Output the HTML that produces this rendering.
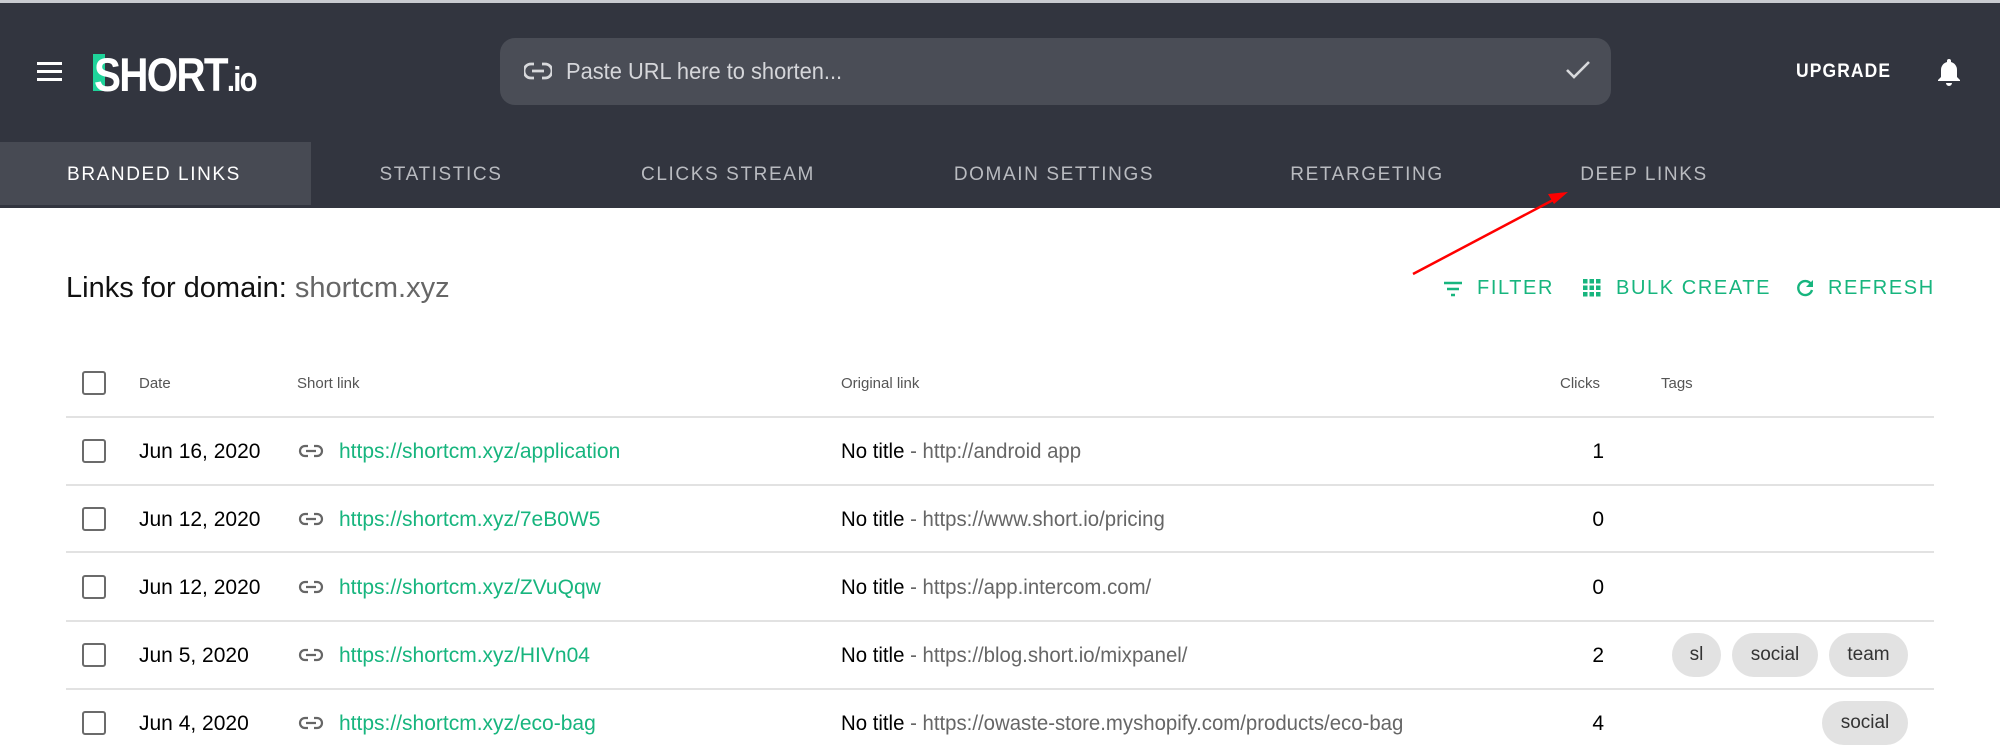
<!DOCTYPE html>
<html><head><meta charset="utf-8"><style>
*{margin:0;padding:0;box-sizing:border-box}
body{width:2000px;height:746px;overflow:hidden;background:#fff;font-family:"Liberation Sans",sans-serif;position:relative}
.a{position:absolute;white-space:nowrap}
.hdr{position:absolute;left:0;top:0;width:2000px;height:208px;background:#32353f;border-top:3px solid #c9cbd0}
.tab{position:absolute;top:164px;font-size:19px;letter-spacing:1.6px;color:#b9bbc0;transform:translateX(-50%)}
.th{font-size:15px;color:#555;top:375px}
.line{position:absolute;left:66px;width:1868px;height:2px;background:#e2e2e2}
.cb{position:absolute;left:82px;width:24px;height:24px;border:2.5px solid #6b6b6b;border-radius:3px}
.row{font-size:21px}
.nx{display:inline-block;transform:scaleX(0.97);transform-origin:left}
.chip{position:absolute;height:44px;border-radius:22px;background:#e2e2e2;font-size:19px;color:#333;text-align:center;line-height:44px}
.g{color:#17b57e}
.btn{font-size:20px;letter-spacing:1.6px;color:#17b57e;top:277px}
</style></head><body>
<div class="hdr"></div>
<div class="a" style="left:0;top:142px;width:311px;height:63px;background:#474a53"></div>
<div class="a" style="left:37px;top:62px;width:25px;height:3px;background:#fff"></div>
<div class="a" style="left:37px;top:70px;width:25px;height:3px;background:#fff"></div>
<div class="a" style="left:37px;top:78px;width:25px;height:3px;background:#fff"></div>
<div class="a" style="left:93px;top:54px;width:12px;height:37px;background:#1fd39a"></div>
<div class="a" style="left:94px;top:47px;font-size:47px;font-weight:bold;color:#fff;letter-spacing:-2px;transform:scaleX(0.86);transform-origin:left">SHORT<span style="font-size:34px">.io</span></div>
<div class="a" style="left:500px;top:38px;width:1111px;height:67px;background:#4a4d56;border-radius:15px"></div>
<svg class="a" style="left:524px;top:60px" width="28" height="22" viewBox="0 0 28 22"><path d="M10 4H7a7 7 0 0 0 0 14h3M18 4h3a7 7 0 0 1 0 14h-3M8 11h12" stroke="#d8d9dc" stroke-width="2.8" fill="none"/></svg>
<div class="a" style="left:566px;top:58px;font-size:23px;color:#d5d6da;transform:scaleX(0.95);transform-origin:left">Paste URL here to shorten...</div>
<svg class="a" style="left:1564px;top:58px" width="28" height="24" viewBox="0 0 28 24"><path d="M3 12l7 7L25 4" stroke="#d8d9dc" stroke-width="2.6" fill="none"/></svg>
<div class="a" style="left:1796px;top:61px;font-size:19px;letter-spacing:1.2px;color:#fff;font-weight:bold;transform:scaleX(0.92);transform-origin:left">UPGRADE</div>
<svg class="a" style="left:1936px;top:56px" width="26" height="30" viewBox="0 0 26 30"><path d="M13 3a2 2 0 0 1 2 2v1a8 8 0 0 1 6 8v7l3 3v1H2v-1l3-3v-7a8 8 0 0 1 6-8V5a2 2 0 0 1 2-2zM10 27h6a3 3 0 0 1-6 0z" fill="#fff"/></svg>
<div class="tab" style="left:154px;color:#fff">BRANDED LINKS</div>
<div class="tab" style="left:441px">STATISTICS</div>
<div class="tab" style="left:728px">CLICKS STREAM</div>
<div class="tab" style="left:1054px">DOMAIN SETTINGS</div>
<div class="tab" style="left:1367px">RETARGETING</div>
<div class="tab" style="left:1644px">DEEP LINKS</div>
<svg class="a" style="left:0;top:0" width="2000" height="746"><line x1="1413" y1="274" x2="1555" y2="199" stroke="#f00" stroke-width="2.5"/><path d="M1568 192l-20 2 6 10z" fill="#f00"/></svg>
<div class="a" style="left:66px;top:272px;font-size:29px;color:#111">Links for domain: <span style="color:#666">shortcm.xyz</span></div>
<svg class="a" style="left:1442px;top:280px" width="22" height="18" viewBox="0 0 22 18"><path d="M2 3h18M5 9h12M9 15h4" stroke="#17b57e" stroke-width="2.4"/></svg>
<div class="a btn" style="left:1477px">FILTER</div>
<svg class="a" style="left:1583px;top:279px" width="18" height="18" viewBox="0 0 18 18" fill="#17b57e"><rect x="0" y="0" width="4.5" height="4.5"/><rect x="6.5" y="0" width="4.5" height="4.5"/><rect x="13" y="0" width="4.5" height="4.5"/><rect x="0" y="6.5" width="4.5" height="4.5"/><rect x="6.5" y="6.5" width="4.5" height="4.5"/><rect x="13" y="6.5" width="4.5" height="4.5"/><rect x="0" y="13" width="4.5" height="4.5"/><rect x="6.5" y="13" width="4.5" height="4.5"/><rect x="13" y="13" width="4.5" height="4.5"/></svg>
<div class="a btn" style="left:1616px">BULK CREATE</div>
<svg class="a" style="left:1795px;top:278px" width="20" height="20" viewBox="0 0 20 20"><path d="M16 6A7 7 0 1 0 17 12" stroke="#17b57e" stroke-width="2.4" fill="none"/><path d="M18 2v7h-7z" fill="#17b57e"/></svg>
<div class="a btn" style="left:1828px">REFRESH</div>
<div class="cb" style="top:371px"></div>
<div class="a th" style="left:139px">Date</div>
<div class="a th" style="left:297px">Short link</div>
<div class="a th" style="left:841px">Original link</div>
<div class="a th" style="left:1560px">Clicks</div>
<div class="a th" style="left:1661px">Tags</div>
<div class="line" style="top:416px"></div>
<div class="line" style="top:484px"></div>
<div class="line" style="top:551px"></div>
<div class="line" style="top:620px"></div>
<div class="line" style="top:688px"></div>
<div class="cb" style="top:439px"></div>
<div class="cb" style="top:507px"></div>
<div class="cb" style="top:575px"></div>
<div class="cb" style="top:643px"></div>
<div class="cb" style="top:711px"></div>
<div class="a row" style="left:139px;top:440px">Jun 16, 2020</div>
<div class="a row" style="left:139px;top:508px">Jun 12, 2020</div>
<div class="a row" style="left:139px;top:576px">Jun 12, 2020</div>
<div class="a row" style="left:139px;top:644px">Jun 5, 2020</div>
<div class="a row" style="left:139px;top:712px">Jun 4, 2020</div>
<svg class="a" style="left:298px;top:444px" width="26" height="14" viewBox="0 0 26 14"><path d="M10 2H7a5 5 0 0 0 0 10h3M16 2h3a5 5 0 0 1 0 10h-3M8 7h10" stroke="#666" stroke-width="2.2" fill="none"/></svg>
<svg class="a" style="left:298px;top:512px" width="26" height="14" viewBox="0 0 26 14"><path d="M10 2H7a5 5 0 0 0 0 10h3M16 2h3a5 5 0 0 1 0 10h-3M8 7h10" stroke="#666" stroke-width="2.2" fill="none"/></svg>
<svg class="a" style="left:298px;top:580px" width="26" height="14" viewBox="0 0 26 14"><path d="M10 2H7a5 5 0 0 0 0 10h3M16 2h3a5 5 0 0 1 0 10h-3M8 7h10" stroke="#666" stroke-width="2.2" fill="none"/></svg>
<svg class="a" style="left:298px;top:648px" width="26" height="14" viewBox="0 0 26 14"><path d="M10 2H7a5 5 0 0 0 0 10h3M16 2h3a5 5 0 0 1 0 10h-3M8 7h10" stroke="#666" stroke-width="2.2" fill="none"/></svg>
<svg class="a" style="left:298px;top:716px" width="26" height="14" viewBox="0 0 26 14"><path d="M10 2H7a5 5 0 0 0 0 10h3M16 2h3a5 5 0 0 1 0 10h-3M8 7h10" stroke="#666" stroke-width="2.2" fill="none"/></svg>
<div class="a row g" style="left:339px;top:440px">https://shortcm.xyz/application</div>
<div class="a row g" style="left:339px;top:508px">https://shortcm.xyz/7eB0W5</div>
<div class="a row g" style="left:339px;top:576px">https://shortcm.xyz/ZVuQqw</div>
<div class="a row g" style="left:339px;top:644px">https://shortcm.xyz/HIVn04</div>
<div class="a row g" style="left:339px;top:712px">https://shortcm.xyz/eco-bag</div>
<div class="a row nx" style="left:841px;top:440px">No title <span style="color:#666">- http://android app</span></div>
<div class="a row nx" style="left:841px;top:508px">No title <span style="color:#666">- https://www.short.io/pricing</span></div>
<div class="a row nx" style="left:841px;top:576px">No title <span style="color:#666">- https://app.intercom.com/</span></div>
<div class="a row nx" style="left:841px;top:644px">No title <span style="color:#666">- https://blog.short.io/mixpanel/</span></div>
<div class="a row nx" style="left:841px;top:712px">No title <span style="color:#666">- https://owaste-store.myshopify.com/products/eco-bag</span></div>
<div class="a row" style="left:1588px;top:440px;width:16px;text-align:right">1</div>
<div class="a row" style="left:1588px;top:508px;width:16px;text-align:right">0</div>
<div class="a row" style="left:1588px;top:576px;width:16px;text-align:right">0</div>
<div class="a row" style="left:1588px;top:644px;width:16px;text-align:right">2</div>
<div class="a row" style="left:1588px;top:712px;width:16px;text-align:right">4</div>
<div class="chip" style="left:1672px;top:633px;width:49px">sl</div>
<div class="chip" style="left:1732px;top:633px;width:86px">social</div>
<div class="chip" style="left:1829px;top:633px;width:79px">team</div>
<div class="chip" style="left:1822px;top:701px;width:86px">social</div>
</body></html>
